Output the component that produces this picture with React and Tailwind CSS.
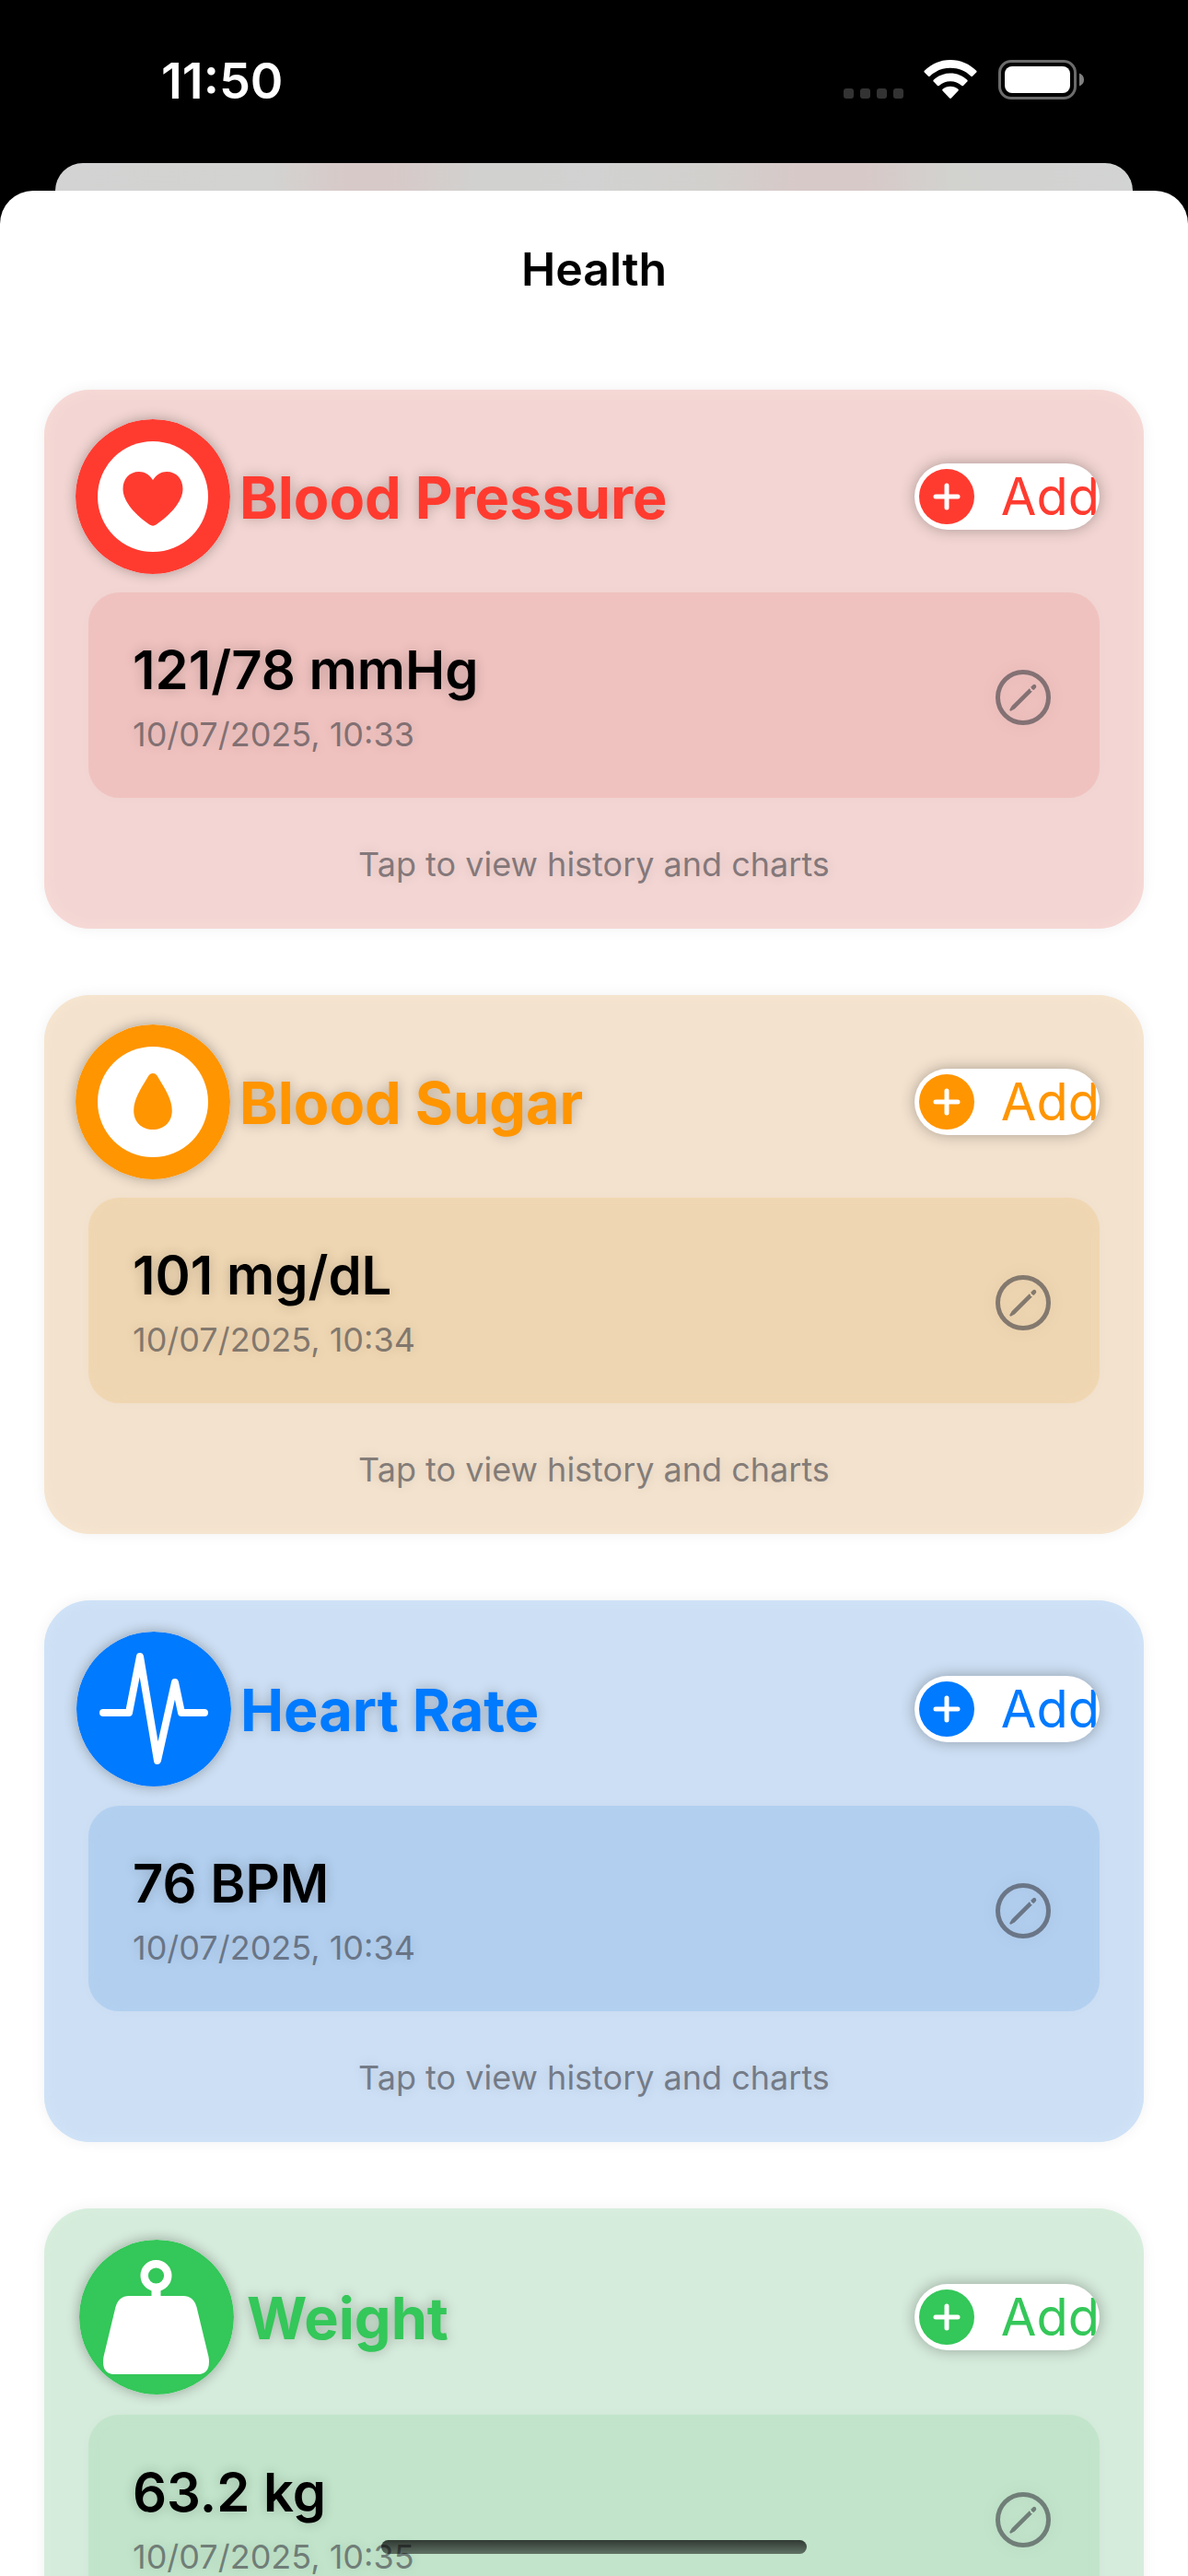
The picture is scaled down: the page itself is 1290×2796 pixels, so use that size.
import React from "react";

const hint = "Tap to view history and charts";

const cards = [
  {
    title: "Blood Pressure",
    value: "121/78 mmHg",
    date: "10/07/2025, 10:33",
    hint,
    icon: HeartIcon,
    text: "text-[#ff3b30]",
    card: "bg-[#f3d6d3] shadow-[0_0_16px_rgba(0,0,0,0.06),inset_0_0_16px_#f9dbd8]",
    inner: "bg-[#efc2bf] shadow-[0_0_14px_rgba(0,0,0,0.02),inset_0_0_12px_#f1c3c0]",
    header: "pt-8 pb-5 pl-[34px]",
    gap: "gap-[10px]",
  },
  {
    title: "Blood Sugar",
    value: "101 mg/dL",
    date: "10/07/2025, 10:34",
    hint,
    icon: DropIcon,
    text: "text-[#ff9500]",
    card: "bg-[#f3e2ce] shadow-[0_0_16px_rgba(0,0,0,0.06),inset_0_0_16px_#f8e7d0]",
    inner: "bg-[#efd6b2] shadow-[0_0_14px_rgba(0,0,0,0.02),inset_0_0_12px_#f1d8b3]",
    header: "pt-8 pb-5 pl-[34px]",
    gap: "gap-[10px]",
  },
  {
    title: "Heart Rate",
    value: "76 BPM",
    date: "10/07/2025, 10:34",
    hint,
    icon: PulseIcon,
    text: "text-[#007aff]",
    card: "bg-[#cddff4] shadow-[0_0_16px_rgba(0,0,0,0.06),inset_0_0_16px_#d1e5f9]",
    inner: "bg-[#b2cfef] shadow-[0_0_14px_rgba(0,0,0,0.02),inset_0_0_12px_#b3d1f2]",
    header: "pt-[34px] pb-[21px] pl-[35px]",
    gap: "gap-[10px]",
  },
  {
    title: "Weight",
    value: "63.2 kg",
    date: "10/07/2025, 10:35",
    icon: WeightIcon,
    text: "text-[#34c759]",
    card: "bg-[#d5ebdb] shadow-[0_0_16px_rgba(0,0,0,0.06),inset_0_0_16px_#d9f0df]",
    inner: "bg-[#c1e4ca] shadow-[0_0_14px_rgba(0,0,0,0.02),inset_0_0_12px_#c3e6cc]",
    header: "pt-[34px] pb-[22px] pl-[38px]",
    gap: "gap-[14px]",
  },
];

const badge = "size-[168px] shrink-0 rounded-full shadow-[0_0_14px_rgba(0,0,0,0.3)]";

function HeartIcon() {
  return (
    <svg viewBox="0 0 168 168" className={badge} aria-hidden="true">
      <circle cx="84" cy="84" r="84" fill="currentColor" />
      <circle cx="84" cy="84" r="60" fill="#fff" />
      <path
        d="M84 66C80 60 75 57 69 57C58.500 57 51.500 65 51.500 75.500C51.500 90 66 104.500 80.500 114.500Q84 116.800 87.500 114.500C102 104.500 116.500 90 116.500 75.500C116.500 65 109.500 57 99 57C93 57 88 60 84 66Z"
        fill="currentColor"
      />
    </svg>
  );
}

function DropIcon() {
  return (
    <svg viewBox="0 0 168 168" className={badge} aria-hidden="true">
      <circle cx="84" cy="84" r="84" fill="currentColor" />
      <circle cx="84" cy="84" r="60" fill="#fff" />
      <path
        d="M84 53C86.500 53 88 54.500 89.500 57C97 69.500 104.800 81 104.800 93.500C104.800 106 96 114 84 114C72 114 63.200 106 63.200 93.500C63.200 81 71 69.500 78.500 57C80 54.500 81.500 53 84 53Z"
        fill="currentColor"
      />
    </svg>
  );
}

function PulseIcon() {
  return (
    <svg viewBox="0 0 168 168" className={badge} aria-hidden="true">
      <circle cx="84" cy="84" r="84" fill="currentColor" />
      <polyline
        points="29,88 57,88 69,27 88,140 107,55 114,88 139,88"
        fill="none"
        stroke="#fff"
        strokeWidth="8"
        strokeLinecap="round"
        strokeLinejoin="round"
      />
    </svg>
  );
}

function WeightIcon() {
  return (
    <svg viewBox="0 0 168 168" className={badge} aria-hidden="true">
      <circle cx="84" cy="84" r="84" fill="currentColor" />
      <circle cx="83.500" cy="39" r="12.800" fill="none" stroke="#fff" strokeWidth="8.400" />
      <path d="M78.500 53H88.500V63H78.500Z" fill="#fff" />
      <path
        d="M54 61H113Q124 61 127.500 73L140.500 127Q143.500 146 128 146H39Q23.500 146 26.500 127L39.500 73Q43 61 54 61Z"
        fill="#fff"
      />
    </svg>
  );
}

function PlusIcon() {
  return (
    <svg viewBox="0 0 60 60" className="size-[60px] shrink-0" aria-hidden="true">
      <circle cx="30" cy="30" r="30" fill="currentColor" />
      <path d="M30 18V42M18 30H42" stroke="#fff" strokeWidth="5" strokeLinecap="round" />
    </svg>
  );
}

function PencilIcon() {
  return (
    <svg viewBox="0 0 60 60" className="size-[60px]" fill="currentColor" aria-hidden="true">
      <circle cx="30" cy="30" r="27.500" fill="none" stroke="currentColor" strokeWidth="5" />
      <path d="M36.700 20.300L17.600 39.200L15.300 43.300Q15.200 44.800 16.600 44.700L20.800 42.600L39.900 23.400L38.200 22.700L37.800 21.200Z" />
      <path d="M38.200 18.700L40.500 16.500Q42 15.200 43.700 16.500Q45 18.200 43.700 19.700L41.500 22L39.500 21Z" />
    </svg>
  );
}

function StatusBar() {
  return (
    <div className="flex h-[177px] shrink-0 justify-between pl-[175px] pr-[112px] pt-[65px] text-white">
      <time className="h-[46px] text-[54px] font-semibold leading-[46px]">11:50</time>
      <div className="flex h-[43px] items-end">
        <svg viewBox="0 0 65 11" className="mb-px mr-[22px] h-[11px] w-[65px]" fill="#333" aria-hidden="true">
          <rect x="0" width="11" height="11" rx="3" />
          <rect x="18" width="11" height="11" rx="3" />
          <rect x="36" width="11" height="11" rx="3" />
          <rect x="54" width="11" height="11" rx="3" />
        </svg>
        <svg viewBox="0 0 58 43" className="mr-[23px] h-[43px] w-[58px]" fill="#fff" aria-label="Wi-Fi">
          <path d="M29 0C40 0 50 4.500 57.200 11.800Q58 12.700 57.200 13.600L53 17.700Q52.200 18.500 51.300 17.700C45.500 12 37.500 8.800 29 8.800S12.500 12 6.700 17.700Q5.800 18.500 5 17.700L.8 13.600Q0 12.700.8 11.800C8 4.500 18 0 29 0Z" />
          <path d="M29 14.500C36 14.500 42.500 17.200 47.300 21.800Q48.100 22.700 47.300 23.600L43 27.900Q42.200 28.600 41.300 27.900C38 24.900 33.700 23.200 29 23.200S20 24.900 16.700 27.900Q15.800 28.600 15 27.900L10.700 23.600Q9.900 22.700 10.700 21.800C15.500 17.200 22 14.500 29 14.500Z" />
          <path d="M29 28.800C32.200 28.800 35.100 29.900 37.500 31.800Q38.300 32.700 37.500 33.500L29.900 41.500Q29 42.300 28.100 41.500L20.500 33.500Q19.700 32.700 20.500 31.800C22.900 29.900 25.800 28.800 29 28.800Z" />
        </svg>
        <svg viewBox="0 0 94 43" className="h-[43px] w-[94px]" aria-label="Battery full">
          <rect x="1.500" y="1.500" width="82" height="40" rx="12.500" fill="none" stroke="#6b6b6b" strokeWidth="3" />
          <rect x="7" y="7" width="71" height="29" rx="8" fill="#fff" />
          <path d="M88 14.500Q93 16.500 93 21.500T88 28.500Z" fill="#808080" />
        </svg>
      </div>
    </div>
  );
}

function HealthCard({ title, value, date, hint: hintText, icon: Icon, text, card, inner, header, gap }) {
  return (
    <article className={`shrink-0 rounded-[50px] px-12 pb-[46px] ${card}`}>
      <header className={`-ml-12 flex items-center justify-between ${header} ${text}`}>
        <div className={`flex items-center ${gap}`}>
          <Icon />
          <h2 className="whitespace-nowrap pt-0.5 text-[63px] font-bold leading-[80px] [text-shadow:0_0_14px_rgba(0,0,0,0.25)]">
            {title}
          </h2>
        </div>
        <button
          type="button"
          aria-label={`Add ${title}`}
          className="flex h-[72px] w-[201px] shrink-0 items-center justify-between overflow-hidden rounded-full bg-white pl-[5px] shadow-[0_0_16px_rgba(0,0,0,0.3)]"
        >
          <PlusIcon />
          <span className="text-[56px] leading-[72px]">Add</span>
        </button>
      </header>
      <section className={`flex items-center justify-between rounded-[34px] pb-[45px] pl-12 pr-[53px] pt-[49px] ${inner}`}>
        <div className="flex flex-col gap-[10px]">
          <p className="text-[58px] font-semibold leading-[71px] text-black [text-shadow:0_0_14px_rgba(0,0,0,0.2)]">
            {value}
          </p>
          <p className="text-[36px] leading-[48px] text-[#3c3c43]/60 [text-shadow:0_0_14px_rgba(0,0,0,0.12)]">
            {date}
          </p>
        </div>
        <button
          type="button"
          aria-label={`Edit ${title} reading`}
          className="rounded-full text-[#3c3c43]/60 drop-shadow-[0_0_8px_rgba(0,0,0,0.1)]"
        >
          <PencilIcon />
        </button>
      </section>
      {hintText && (
        <button
          type="button"
          className="mt-12 block w-full text-center text-[36px] leading-[48px] text-[#3c3c43]/60 [text-shadow:0_0_14px_rgba(0,0,0,0.12)]"
        >
          {hintText}
        </button>
      )}
    </article>
  );
}

export default function App() {
  return (
    <div className="relative flex h-screen flex-col overflow-hidden bg-black font-[Inter,sans-serif]">
      <StatusBar />
      <div className="mx-[60px] h-[30px] shrink-0 rounded-t-[30px] bg-[linear-gradient(90deg,#d2d3d2_0%,#d3d3d1_20%,#d7c9c8_27%,#d7c9c8_31%,#d1d1cf_39%,#d1d2d1_50%,#d2d0cd_61%,#d7c9c8_69%,#d7c9c8_75%,#d2d2cf_83%,#d2d3d3_100%)]" />
      <main className="flex min-h-0 flex-1 flex-col rounded-t-[36px] bg-white">
        <h1 className="shrink-0 pb-[29px] pt-[55px] text-center text-[50px] font-semibold leading-[60px] text-black">
          Health
        </h1>
        <div className="flex min-h-0 flex-1 flex-col gap-[72px] overflow-y-auto px-12 pt-[72px] [scrollbar-width:none]">
          {cards.map((item) => (
            <HealthCard key={item.title} {...item} />
          ))}
        </div>
      </main>
      <div className="absolute bottom-6 left-1/2 h-[15px] w-[462px] -translate-x-1/2 rounded-full bg-linear-to-b from-black/75 to-black/50" />
    </div>
  );
}
